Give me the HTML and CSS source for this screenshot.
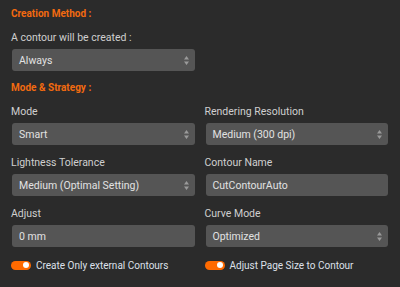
FILE: index.html
```html
<!DOCTYPE html>
<html>
<head>
<meta charset="utf-8">
<link rel="stylesheet" href="styles.css">
</head>
<body>
<div class="panel">
  <div class="heading">Creation Method :</div>
  <div class="grid">
    <div class="field">
      <div class="label">A contour will be created :</div>
      <div class="select"><span>Always</span><svg class="arrows" width="5" height="9" viewBox="0 0 5 9"><path d="M2.5 0L5 3.5H0Z M2.5 9L5 5.5H0Z" fill="#9a9a9a"/></svg></div>
    </div>
  </div>
  <div class="heading">Mode &amp; Strategy :</div>
  <div class="grid">
    <div class="field">
      <div class="label">Mode</div>
      <div class="select"><span>Smart</span><svg class="arrows" width="5" height="9" viewBox="0 0 5 9"><path d="M2.5 0L5 3.5H0Z M2.5 9L5 5.5H0Z" fill="#9a9a9a"/></svg></div>
    </div>
    <div class="field">
      <div class="label">Rendering Resolution</div>
      <div class="select"><span>Medium (300 dpi)</span><svg class="arrows" width="5" height="9" viewBox="0 0 5 9"><path d="M2.5 0L5 3.5H0Z M2.5 9L5 5.5H0Z" fill="#9a9a9a"/></svg></div>
    </div>
    <div class="field">
      <div class="label">Lightness Tolerance</div>
      <div class="select"><span>Medium (Optimal Setting)</span><svg class="arrows" width="5" height="9" viewBox="0 0 5 9"><path d="M2.5 0L5 3.5H0Z M2.5 9L5 5.5H0Z" fill="#9a9a9a"/></svg></div>
    </div>
    <div class="field">
      <div class="label">Contour Name</div>
      <div class="select input"><span>CutContourAuto</span></div>
    </div>
    <div class="field">
      <div class="label">Adjust</div>
      <div class="select input"><span>0 mm</span></div>
    </div>
    <div class="field">
      <div class="label">Curve Mode</div>
      <div class="select"><span>Optimized</span><svg class="arrows" width="5" height="9" viewBox="0 0 5 9"><path d="M2.5 0L5 3.5H0Z M2.5 9L5 5.5H0Z" fill="#9a9a9a"/></svg></div>
    </div>
    <div class="toggle-row">
      <span class="toggle"><span class="knob"></span></span>
      <span class="toggle-label">Create Only external Contours</span>
    </div>
    <div class="toggle-row">
      <span class="toggle"><span class="knob"></span></span>
      <span class="toggle-label">Adjust Page Size to Contour</span>
    </div>
  </div>
</div>
</body>
</html>
```
FILE: styles.css
```css
html, body {
  margin: 0;
  padding: 0;
  background: #2b2b2b;
}
body {
  width: 400px;
  height: 287px;
  overflow: hidden;
  font-family: "Roboto", "Lato", sans-serif;
  font-size: 10.5px;
  color: #cfcfcf;
}
.panel {
  padding: 6px 12px 0 12px;
  display: flex;
  flex-direction: column;
}
.heading {
  color: #f26a10;
  font-weight: bold;
  font-size: 10px;
  line-height: 15px;
  margin-left: -1px;
  margin-bottom: 9px;
}
.grid {
  display: grid;
  grid-template-columns: 1fr 1fr;
  column-gap: 11px;
  row-gap: 10px;
  margin-bottom: 9px;
}
.field {
  display: flex;
  flex-direction: column;
}
.label {
  line-height: 15px;
  margin-bottom: 4px;
  margin-left: -1px;
  color: #cfcfcf;
}
.select {
  height: 22px;
  box-sizing: border-box;
  background: #555555;
  border-radius: 3px;
  display: flex;
  align-items: center;
  justify-content: space-between;
  padding: 0 6px 0 7px;
  color: #e2e2e2;
}
.arrows {
  display: block;
}
.toggle-row {
  display: flex;
  align-items: center;
  gap: 5px;
  height: 16px;
}
.toggle {
  width: 20px;
  height: 9px;
  border-radius: 5px;
  background: #ff6a00;
  display: flex;
  align-items: center;
  justify-content: flex-end;
  padding-right: 2px;
  box-sizing: border-box;
  margin-left: -1px;
}
.knob {
  width: 6px;
  height: 6px;
  border-radius: 50%;
  background: #ffffff;
}
.toggle-label {
  color: #dde0ea;
  font-size: 10px;
}
```
